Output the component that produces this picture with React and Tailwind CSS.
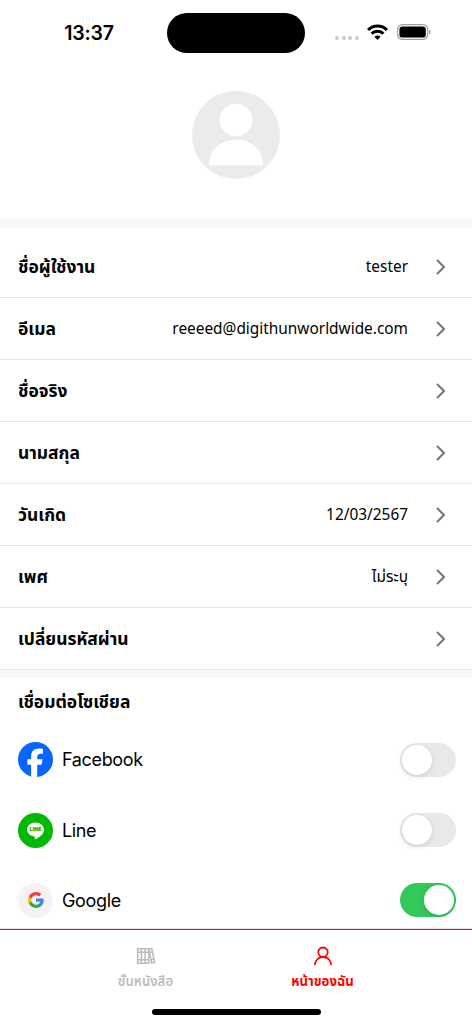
import React, { useState } from 'react';

const profileRows = [
  { id: 'username', label: 'ชื่อผู้ใช้งาน', value: 'tester' },
  { id: 'email', label: 'อีเมล', value: 'reeeed@digithunworldwide.com' },
  { id: 'firstName', label: 'ชื่อจริง', value: '' },
  { id: 'lastName', label: 'นามสกุล', value: '' },
  { id: 'birthday', label: 'วันเกิด', value: '12/03/2567' },
  { id: 'gender', label: 'เพศ', value: 'ไม่ระบุ' },
  { id: 'password', label: 'เปลี่ยนรหัสผ่าน', value: '' },
];

function FacebookLogo() {
  return (
    <svg viewBox="0 0 35 35" className="w-[35px] h-[35px]">
      <circle cx="17.5" cy="17.5" r="17.5" fill="#0866ff" />
      <path
        d="M13.1 34.4V22.8H9.4v-5.5h3.7v-2.4c0-5.7 2.6-8.4 8.2-8.4 1.1 0 2.9.2 3.7.4v5c-.4 0-1.1-.1-2-.1-2.8 0-3.8 1.1-3.8 3.8v1.7h5.4l-1 5.5h-4.4v12q-3 .6-6.1-.4z"
        fill="white"
      />
    </svg>
  );
}

function LineLogo() {
  return (
    <svg viewBox="0 0 35 35" className="w-[35px] h-[35px]">
      <circle cx="17.5" cy="17.5" r="17.5" fill="#00b900" />
      <path
        d="M25.9 16.6c0-3.9-3.8-7-8.4-7s-8.4 3.1-8.4 7c0 3.5 3 6.4 7 6.9.9.2.8.6.6 2.1 0 .4-.1.9.9.5 1-.4 5.2-3 7-5.2.9-1.3 1.3-2.8 1.3-4.3z"
        fill="white"
      />
      <text
        x="17.5"
        y="18.4"
        textAnchor="middle"
        textLength="12.2"
        lengthAdjust="spacingAndGlyphs"
        fontSize="5"
        fontWeight="900"
        fontFamily="Inter, sans-serif"
        fill="#00b900"
      >
        LINE
      </text>
    </svg>
  );
}

function GoogleLogo() {
  return (
    <div className="w-[35px] h-[35px] rounded-full bg-[#f3f3f4] flex items-center justify-center">
      <svg viewBox="1 1 22 22" className="w-4 h-4">
        <path
          d="M22.56 12.25c0-.78-.07-1.53-.2-2.25H12v4.26h5.92c-.26 1.37-1.04 2.53-2.21 3.31v2.77h3.57c2.08-1.92 3.28-4.74 3.28-8.09z"
          fill="#4285f4"
        />
        <path
          d="M12 23c2.97 0 5.46-.98 7.28-2.66l-3.57-2.77c-.98.66-2.23 1.06-3.71 1.06-2.86 0-5.29-1.93-6.16-4.53H2.18v2.84C3.99 20.53 7.7 23 12 23z"
          fill="#34a853"
        />
        <path
          d="M5.84 14.09c-.22-.66-.35-1.36-.35-2.09s.13-1.43.35-2.09V7.07H2.18C1.43 8.55 1 10.22 1 12s.43 3.45 1.18 4.93l3.66-2.84z"
          fill="#fbbc05"
        />
        <path
          d="M12 5.38c1.62 0 3.06.56 4.21 1.64l3.15-3.15C17.45 2.09 14.97 1 12 1 7.7 1 3.99 3.47 2.18 7.07l3.66 2.84c.87-2.6 3.3-4.53 6.16-4.53z"
          fill="#ea4335"
        />
      </svg>
    </div>
  );
}

const socials = [
  { id: 'facebook', name: 'Facebook', Logo: FacebookLogo },
  { id: 'line', name: 'Line', Logo: LineLogo },
  { id: 'google', name: 'Google', Logo: GoogleLogo },
];

function StatusBar() {
  return (
    <div className="h-[66px] flex items-center">
      <div className="w-[167px] pl-[11px] pt-px text-center font-['Inter'] text-[19.5px] font-semibold tracking-[-0.2px] leading-none">
        13:37
      </div>
      <div className="w-[138px] h-10 rounded-full bg-black" />
      <div className="flex items-center ml-[30px]">
        <div className="flex gap-[2.6px] mt-[9px]">
          {[0, 1, 2, 3].map((dot) => (
            <span key={dot} className="w-1 h-1 rounded-full bg-[#cbcbcb]" />
          ))}
        </div>
        <svg viewBox="0 0 21 16" className="w-[21px] h-4 ml-[8.2px] -mt-0.5">
          <g fill="none" stroke="black" strokeWidth="3.1">
            <path d="M1.1 6a13.2 13.2 0 0 1 18.8 0" />
            <path d="M4.6 9.7a8.3 8.3 0 0 1 11.8 0" />
          </g>
          <path d="M10.5 16l-3.1-3.2a4.4 4.4 0 0 1 6.2 0z" />
        </svg>
        <svg viewBox="0 0 34 16" className="w-[34px] h-4 ml-[9px] -mt-0.5">
          <rect x=".6" y=".6" width="30" height="14.8" rx="4.8" fill="none" stroke="#a0a0a0" strokeWidth="1.2" />
          <rect x="2.4" y="2.4" width="26.4" height="11.2" rx="3.2" />
          <path d="M32 5.6v4.8q1.7-.8 1.7-2.4t-1.7-2.4z" fill="#999" />
        </svg>
      </div>
    </div>
  );
}

function Avatar() {
  return (
    <svg viewBox="0 0 88 88" className="w-[88px] h-[88px]">
      <circle cx="44" cy="44" r="44" fill="#ebebeb" />
      <circle cx="44" cy="29" r="16.3" fill="white" />
      <path
        d="M18.8 74.5q-1.8 0-1.8-1.8C17.5 58 29 48.8 44 48.8S70.5 58 71 72.7q0 1.8-1.8 1.8z"
        fill="white"
      />
    </svg>
  );
}

function Toggle({ on, onChange }) {
  return (
    <button
      role="switch"
      aria-checked={on}
      onClick={onChange}
      className={`w-14 h-[34px] p-0.5 rounded-full flex items-center ${
        on ? 'bg-[#34c759] justify-end' : 'bg-[#e9e9ea] justify-start'
      }`}
    >
      <span className="w-[30px] h-[30px] rounded-full bg-white shadow-[0_2px_6px_rgba(0,0,0,0.12)]" />
    </button>
  );
}

export default function App() {
  const [linked, setLinked] = useState({ facebook: false, line: false, google: true });

  const toggleLinked = (id) => {
    setLinked((prev) => ({ ...prev, [id]: !prev[id] }));
  };

  return (
    <div className="w-[472px] h-[1024px] overflow-hidden bg-white text-black flex flex-col font-['Noto_Sans','Noto_Sans_Thai',sans-serif]">
      <StatusBar />

      {/* AVATAR */}
      <div className="h-[153px] pt-[25.4px] flex justify-center">
        <Avatar />
      </div>
      <div className="h-[9px] bg-[#f7f7f7] mb-2" />

      {/* PROFILE */}
      {profileRows.map((row) => (
        <div
          key={row.id}
          className="h-[62px] shrink-0 border-b border-[#e5e5e5] pl-[18px] pr-[27px] flex items-center"
        >
          <span className="text-[17.45px] font-bold leading-none">{row.label}</span>
          <span className="ml-auto text-[15.4px] leading-none">{row.value}</span>
          <svg viewBox="0 0 9 16" className="w-[9px] h-4 ml-7">
            <path d="M1 1l7 7-7 7" fill="none" stroke="#777" strokeWidth="2" />
          </svg>
        </div>
      ))}
      <div className="h-2 shrink-0 bg-[#f7f7f7]" />

      {/* SOCIAL ACCOUNTS */}
      <div className="h-[250px] shrink-0 overflow-hidden">
        <h2 className="h-[46.6px] pl-[18px] pt-px flex items-center text-[17.45px] font-bold leading-none">
          เชื่อมต่อโซเชียล
        </h2>
        {socials.map(({ id, name, Logo }) => (
          <div key={id} className="h-[70.3px] pl-[18px] pr-4 flex items-center">
            <Logo />
            <span className="ml-[9px] font-['Inter'] text-[18px] tracking-[-0.35px]">{name}</span>
            <div className="ml-auto">
              <Toggle on={linked[id]} onChange={() => toggleLinked(id)} />
            </div>
          </div>
        ))}
      </div>

      {/* TAB BAR */}
      <nav className="h-[96px] shrink-0 border-t border-[#fbdcdc] bg-white">
        <div className="h-px bg-[#e81010]" />
        <div className="h-[79px] pt-4 pl-[57px] pr-[61px] flex">
          <button className="flex-1 flex flex-col items-center text-[#bdbdbd]">
            <svg viewBox="0 0 20 20" className="w-5 h-5" fill="none" stroke="currentColor" strokeWidth="1.6">
              <path d="M1.7 2.7h11v14.6h-11zM5.4 2.7v14.6M9.1 2.7v14.6M1.7 6.3h11M1.7 13.7h11" />
              <path d="M12.7 3.2l3-.8 3 13.9-3 .8zM13.4 6.6l3-.8M14.9 13.7l3-.8" />
            </svg>
            <span className="mt-[9px] text-[13.2px] font-semibold leading-none">ชั้นหนังสือ</span>
          </button>
          <button className="flex-1 flex flex-col items-center text-[#ff0000]">
            <svg viewBox="0 0 20 20" className="w-5 h-5" fill="none" stroke="currentColor" strokeWidth="1.8">
              <circle cx="10" cy="6.2" r="4.7" />
              <path d="M1.7 19c.6-5 4-8 8.3-8s7.7 3 8.3 8" />
            </svg>
            <span className="mt-[9px] text-[13.2px] font-bold leading-none">หน้าของฉัน</span>
          </button>
        </div>
        <div className="w-[169px] h-[5.5px] rounded-full bg-black mx-auto" />
      </nav>
    </div>
  );
}
